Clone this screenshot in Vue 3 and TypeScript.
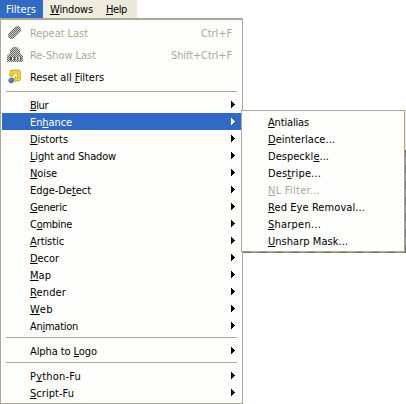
<script setup lang="ts">
interface Item {
  label: string
  key?: number
  width: number
  icon?: string
  accel?: string
  accelWidth?: number
  disabled?: boolean
  active?: boolean
  tall?: boolean
  separator?: boolean
}

const bar: Item[] = [
  { label: 'Filters', key: 5, width: 30, active: true },
  { label: 'Windows', key: 0, width: 43 },
  { label: 'Help', key: 0, width: 21 },
]

const sep: Item = { label: '', width: 0, separator: true }

const menu: Item[] = [
  { label: 'Repeat Last', width: 58, icon: 'repeat', accel: 'Ctrl+F', accelWidth: 31, disabled: true, tall: true },
  { label: 'Re-Show Last', width: 66, icon: 'reshow', accel: 'Shift+Ctrl+F', accelWidth: 61, disabled: true, tall: true },
  { label: 'Reset all Filters', key: 10, width: 74, icon: 'reset', tall: true },
  sep,
  { label: 'Blur', key: 0, width: 18 },
  { label: 'Enhance', key: 2, width: 42, active: true },
  { label: 'Distorts', key: 0, width: 38 },
  { label: 'Light and Shadow', key: 0, width: 86 },
  { label: 'Noise', key: 0, width: 27 },
  { label: 'Edge-Detect', key: 7, width: 61 },
  { label: 'Generic', key: 0, width: 37 },
  { label: 'Combine', key: 1, width: 42 },
  { label: 'Artistic', key: 0, width: 34 },
  { label: 'Decor', key: 0, width: 29 },
  { label: 'Map', key: 0, width: 21 },
  { label: 'Render', key: 0, width: 36 },
  { label: 'Web', key: 0, width: 23 },
  { label: 'Animation', key: 2, width: 48 },
  sep,
  { label: 'Alpha to Logo', key: 9, width: 67 },
  sep,
  { label: 'Python-Fu', key: 1, width: 51 },
  { label: 'Script-Fu', key: 0, width: 44 },
]

const submenu: Item[] = [
  { label: 'Antialias', key: 0, width: 41 },
  { label: 'Deinterlace...', key: 0, width: 67 },
  { label: 'Despeckle...', key: 8, width: 61 },
  { label: 'Destripe...', key: 3, width: 53 },
  { label: 'NL Filter...', key: 0, width: 52, disabled: true },
  { label: 'Red Eye Removal...', key: 0, width: 97 },
  { label: 'Sharpen...', key: 0, width: 53 },
  { label: 'Unsharp Mask...', key: 0, width: 80 },
]

function parts(item: Item): [string, string, string] {
  if (item.key === undefined) return [item.label, '', '']
  return [item.label.slice(0, item.key), item.label[item.key], item.label.slice(item.key + 1)]
}

// Tracks each label so that its advance equals the given width.
const vFit = {
  mounted(el: HTMLElement, binding: { value: number }) {
    const natural = el.getBoundingClientRect().width
    const count = (el.textContent ?? '').length
    el.style.letterSpacing = `${(binding.value - natural) / count}px`
  },
}
</script>

<template>
  <div class="screen">
    <nav class="bar">
      <div v-for="item in bar" :key="item.label" class="tab" :class="{ active: item.active }">
        <span v-fit="item.width" class="label">{{ parts(item)[0] }}<u>{{ parts(item)[1] }}</u>{{ parts(item)[2] }}</span>
      </div>
    </nav>
    <div class="panel">
      <template v-for="(item, i) in menu" :key="i">
        <div v-if="item.separator" class="sep"></div>
        <div v-else class="row" :class="{ tall: item.tall, active: item.active, disabled: item.disabled }">
          <span class="icon">
            <svg v-if="item.icon === 'repeat'" width="16" height="16" viewBox="0 0 16 16">
              <defs>
                <pattern id="dither" width="2" height="2" patternUnits="userSpaceOnUse">
                  <path d="M0 0h1v1H0zM1 1h1v1H1z" fill="#6a6a66" />
                </pattern>
              </defs>
              <path d="M2 8 8 2q3-2 5 0 2 3 0 5l-6 6q-3 2-5 0-2-2 0-5z" fill="#c8c8c4" />
              <path d="M2 8 8 2q3-2 5 0 2 3 0 5l-6 6q-3 2-5 0-2-2 0-5z" fill="url(#dither)" />
            </svg>
            <svg v-else-if="item.icon === 'reshow'" width="16" height="16" viewBox="0 0 16 16">
              <path d="M6 0h4l3 3v3l3 3v6H0V9l3-3V3z" fill="#ccccc8" />
              <path d="M6 0h4l3 3v3l3 3v6H0V9l3-3V3z" fill="url(#dither)" />
              <path d="M3 10h2v3H3zM7 10h1v3H7zM10 10h1v3h-1zM13 10h1v3h-1z" fill="#4c4c48" />
              <path d="M5 10h1v3H5zM9 10h1v3H9zM12 10h1v3h-1z" fill="#eeeeec" />
            </svg>
            <svg v-else-if="item.icon === 'reset'" width="16" height="16" viewBox="0 0 16 16">
              <path d="M4.5 6V2.7h7.3v7.6H8" fill="none" stroke="#b98f16" stroke-width="3.8" stroke-linejoin="round" />
              <path d="M1.2 5.5h6.6L4.5 8.8z" fill="#e3b41f" />
              <path d="M9 6.8v7l-3.4-3.5z" fill="#dcae1c" />
              <path d="M4.5 6V2.7h7.3v7.6H8" fill="none" stroke="#f6d234" stroke-width="2.6" stroke-linejoin="round" />
              <circle cx="4.2" cy="11.4" r="2.5" fill="#4779bd" stroke="#2e5795" stroke-width=".5" />
              <circle cx="3.6" cy="10.7" r=".8" fill="#8eb4e2" />
            </svg>
          </span>
          <span v-fit="item.width" class="label">{{ parts(item)[0] }}<u>{{ parts(item)[1] }}</u>{{ parts(item)[2] }}</span>
          <span class="gap"></span>
          <span v-if="item.accel" v-fit="item.accelWidth ?? 0" class="label accel">{{ item.accel }}</span>
          <svg v-else-if="!item.tall" class="arrow" width="4" height="7" viewBox="0 0 4 7" shape-rendering="crispEdges">
            <path d="M0 0h1v1h1v1h1v1h1v1H3v1H2v1H1v1H0z" fill="currentColor" />
          </svg>
        </div>
      </template>
    </div>
    <div class="flyout">
      <div v-for="item in submenu" :key="item.label" class="row" :class="{ disabled: item.disabled }">
        <span v-fit="item.width" class="label">{{ parts(item)[0] }}<u>{{ parts(item)[1] }}</u>{{ parts(item)[2] }}</span>
      </div>
      <i class="edge-top"></i>
      <i class="edge-right"></i>
      <i class="edge-bottom"></i>
    </div>
  </div>
</template>

<style>
body {
  background: #fff;
  overflow: hidden;
}
</style>

<style scoped>
.screen {
  position: relative;
  width: 406px;
  height: 404px;
  box-sizing: border-box;
  font: 11px/16px "DejaVu Sans Condensed", "DejaVu Sans", sans-serif;
  font-stretch: condensed;
  color: #000;
}
.bar {
  display: flex;
  width: 137px;
  height: 18px;
  background: linear-gradient(100deg, #f3f1e6, #f0eddf 60%, #ebe9da);
}
.tab {
  flex: none;
  height: 18px;
  padding: 2px 0 0 7px;
  box-sizing: border-box;
  width: 56px;
}
.tab.active {
  width: 43px;
  padding-left: 6px;
  background: #316ac5;
  color: #fff;
}
.tab:last-child {
  width: 38px;
}
.label {
  white-space: nowrap;
  flex: none;
}
u {
  text-decoration: underline;
  text-decoration-thickness: 1px;
  text-underline-offset: 1px;
  text-decoration-skip-ink: none;
}
.panel {
  width: 243px;
  height: 386px;
  box-sizing: border-box;
  padding: 2px 0;
  border: 1px solid #aca899;
  border-top: 2px solid #aca899;
  background: #fefefc;
}
.row {
  display: flex;
  align-items: center;
  height: 17px;
  margin: 0 1px;
  padding: 0 5px;
}
.row .label {
  padding-top: 2px;
}
.row.tall {
  height: 22px;
}
.row.active {
  background: #316ac5;
  color: #fff;
  margin-right: 0;
  padding-right: 6px;
}
.row.disabled {
  color: #aca899;
}
.icon {
  width: 23px;
  height: 16px;
  flex: none;
}
.icon svg {
  display: block;
}
.gap {
  flex: 1;
}
.accel {
  margin-right: 4px;
}
.arrow {
  margin-right: 1px;
}
.sep {
  height: 8px;
  box-sizing: border-box;
  padding-top: 3px;
  margin: 0 5px;
}
.sep::before {
  content: "";
  display: block;
  height: 1px;
  background: #aca899;
}
.flyout {
  position: absolute;
  left: 241px;
  top: 110px;
  width: 164px;
  height: 142px;
  box-sizing: border-box;
  padding: 2px 0;
  border: 1px solid #aca899;
  background: #fefefc;
}
.flyout .row {
  padding-left: 25px;
}
.edge-top {
  position: absolute;
  right: -2px;
  top: -1px;
  width: 1px;
  height: 40px;
  background: #ece9d8;
}
.edge-right {
  position: absolute;
  right: -2px;
  top: 39px;
  width: 1px;
  height: 103px;
  background: repeating-linear-gradient(#706f69 0 7px, #99978c 7px 15px, #706f69 15px 16px);
}
.edge-bottom {
  position: absolute;
  left: 1px;
  bottom: -2px;
  width: 163px;
  height: 1px;
  background: repeating-linear-gradient(90deg, #706f69 0 8px, #99978c 8px 16px);
}
</style>
